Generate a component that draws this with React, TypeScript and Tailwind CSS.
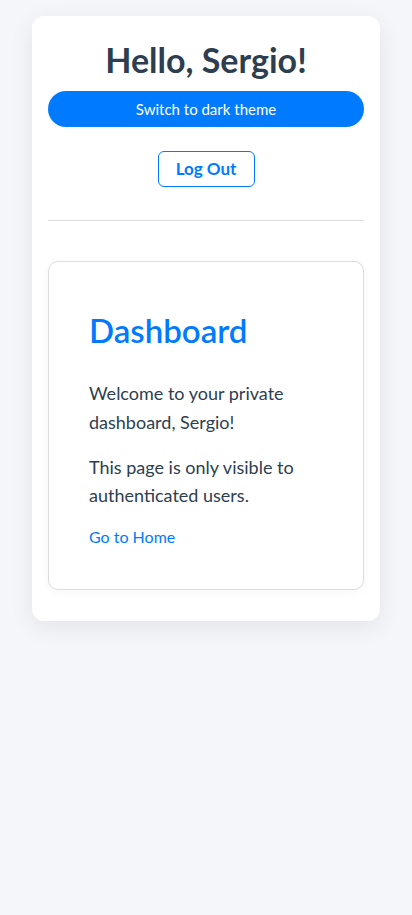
export default function App() {
  return (
    <div
      className="min-h-[915px] bg-[#f5f6fa] pt-4"
      style={{ fontFamily: 'Lato, "Noto Sans", sans-serif' }}
    >
      <div className="mx-8 w-[348px] rounded-xl bg-white px-4 pt-6 pb-[31px] shadow-[0_6px_24px_rgba(0,0,0,0.08)]">
        <h1 className="text-center text-[34px] leading-[40px] font-bold text-[#2c3e50]">
          Hello, Sergio!
        </h1>
        <button className="mt-[11px] h-9 w-full rounded-full bg-[#007bff] text-[15px] text-white">
          Switch to dark theme
        </button>
        <div className="mt-6 flex justify-center">
          <button className="h-9 w-[97px] rounded-md border border-[#007bff] text-[17px] font-bold text-[#007bff]">
            Log Out
          </button>
        </div>
        <hr className="mt-[33px] border-t border-[#dddddd]" />
        <div className="mt-10 rounded-[10px] border border-[#dddddd] bg-white p-10 shadow-[0_2px_10px_rgba(0,0,0,0.04)]">
          <h2 className="mt-2 text-[33px] leading-[40px] font-semibold text-[#007bff]">
            Dashboard
          </h2>
          <p className="mt-[29px] text-[18px] leading-[1.6] text-[#2c3e50]">
            Welcome to your private dashboard, Sergio!
          </p>
          <p className="mt-4 text-[18px] leading-[1.6] text-[#2c3e50]">
            This page is only visible to authenticated users.
          </p>
          <a href="#" className="mt-[15px] block text-[16px] leading-6 text-[#007bff]">
            Go to Home
          </a>
        </div>
      </div>
    </div>
  );
}
